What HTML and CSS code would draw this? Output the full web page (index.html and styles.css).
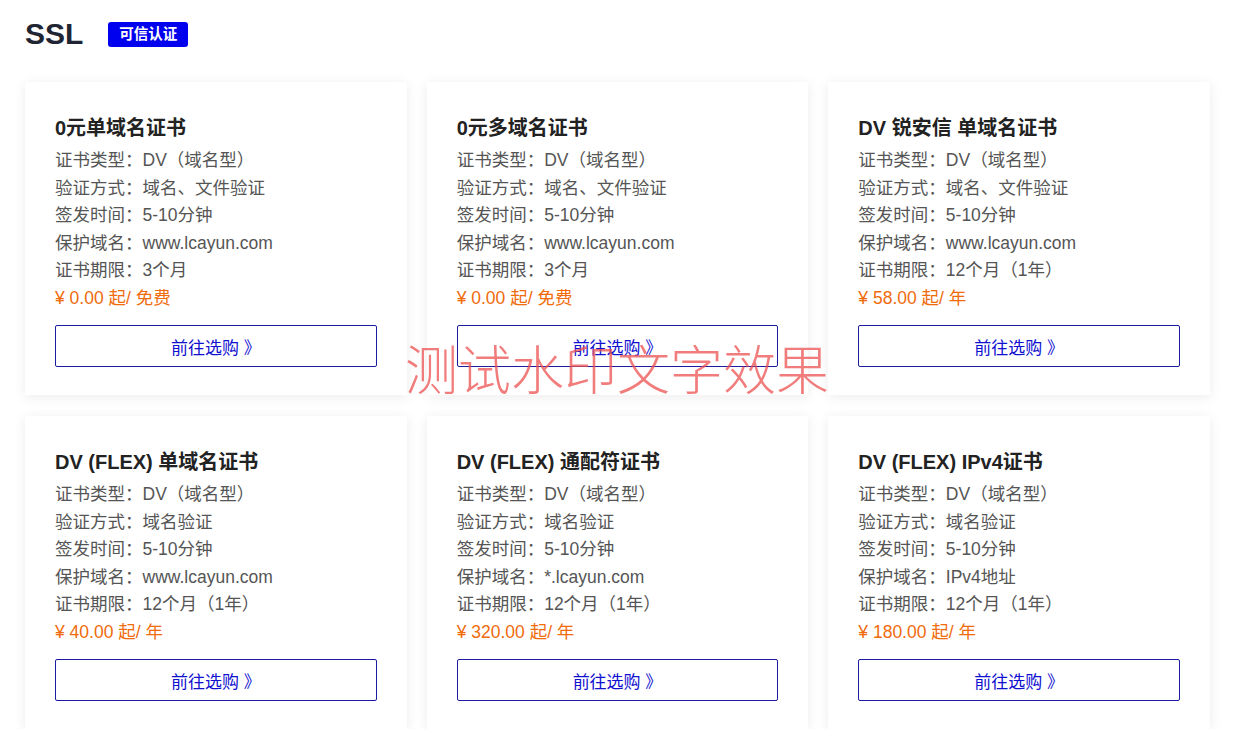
FILE: index.html
```html
<!DOCTYPE html>
<html lang="zh-CN">
<head>
<meta charset="utf-8">
<title>SSL</title>
<link rel="stylesheet" href="styles.css">
</head>
<body>
<div class="page">
  <div class="header">
    <h1 class="title">SSL</h1>
    <span class="badge">可信认证</span>
  </div>
  <div class="grid">
    <div class="card">
      <h2 class="card-title">0元单域名证书</h2>
      <p class="row">证书类型：DV（域名型）</p>
      <p class="row">验证方式：域名、文件验证</p>
      <p class="row">签发时间：5-10分钟</p>
      <p class="row">保护域名：www.lcayun.com</p>
      <p class="row">证书期限：3个月</p>
      <p class="price">¥ 0.00 起/ 免费</p>
      <a class="btn">前往选购 》</a>
    </div>
    <div class="card">
      <h2 class="card-title">0元多域名证书</h2>
      <p class="row">证书类型：DV（域名型）</p>
      <p class="row">验证方式：域名、文件验证</p>
      <p class="row">签发时间：5-10分钟</p>
      <p class="row">保护域名：www.lcayun.com</p>
      <p class="row">证书期限：3个月</p>
      <p class="price">¥ 0.00 起/ 免费</p>
      <a class="btn">前往选购 》</a>
    </div>
    <div class="card">
      <h2 class="card-title">DV 锐安信 单域名证书</h2>
      <p class="row">证书类型：DV（域名型）</p>
      <p class="row">验证方式：域名、文件验证</p>
      <p class="row">签发时间：5-10分钟</p>
      <p class="row">保护域名：www.lcayun.com</p>
      <p class="row">证书期限：12个月（1年）</p>
      <p class="price">¥ 58.00 起/ 年</p>
      <a class="btn">前往选购 》</a>
    </div>
    <div class="card">
      <h2 class="card-title">DV (FLEX) 单域名证书</h2>
      <p class="row">证书类型：DV（域名型）</p>
      <p class="row">验证方式：域名验证</p>
      <p class="row">签发时间：5-10分钟</p>
      <p class="row">保护域名：www.lcayun.com</p>
      <p class="row">证书期限：12个月（1年）</p>
      <p class="price">¥ 40.00 起/ 年</p>
      <a class="btn">前往选购 》</a>
    </div>
    <div class="card">
      <h2 class="card-title">DV (FLEX) 通配符证书</h2>
      <p class="row">证书类型：DV（域名型）</p>
      <p class="row">验证方式：域名验证</p>
      <p class="row">签发时间：5-10分钟</p>
      <p class="row">保护域名：*.lcayun.com</p>
      <p class="row">证书期限：12个月（1年）</p>
      <p class="price">¥ 320.00 起/ 年</p>
      <a class="btn">前往选购 》</a>
    </div>
    <div class="card">
      <h2 class="card-title">DV (FLEX) IPv4证书</h2>
      <p class="row">证书类型：DV（域名型）</p>
      <p class="row">验证方式：域名验证</p>
      <p class="row">签发时间：5-10分钟</p>
      <p class="row">保护域名：IPv4地址</p>
      <p class="row">证书期限：12个月（1年）</p>
      <p class="price">¥ 180.00 起/ 年</p>
      <a class="btn">前往选购 》</a>
    </div>
  </div>
  <div class="watermark">测试水印文字效果</div>
</div>
</body>
</html>
```
FILE: styles.css
```css
* { box-sizing: border-box; }
html, body { margin: 0; padding: 0; background: #fff; }
body {
  font-family: "Liberation Sans", Arial, "Noto Sans CJK SC", sans-serif;
  color: #555;
}
.page {
  position: relative;
  padding: 17px 40px 0 25px;
}
.header {
  display: flex;
  align-items: center;
  height: 34px;
}
.title {
  margin: 0;
  font-size: 30px;
  font-weight: 700;
  color: #1f2533;
  line-height: 34px;
}
.badge {
  margin-left: 25px;
  background: #0000ee;
  color: #fff;
  font-size: 14.5px;
  font-weight: 700;
  padding: 0 11px;
  height: 25px;
  line-height: 25px;
  border-radius: 3px;
}
.grid {
  margin-top: 31px;
  display: grid;
  grid-template-columns: repeat(3, 1fr);
  column-gap: 20px;
  row-gap: 21px;
}
.card {
  background: #fff;
  box-shadow: 0 2px 12px rgba(0, 0, 0, 0.08);
  padding: 33px 30px 28px;
  display: flex;
  flex-direction: column;
}
.card-title {
  margin: 0 0 6px;
  font-size: 20px;
  font-weight: 700;
  color: #222;
  line-height: 26px;
}
.row, .price {
  margin: 0;
  font-size: 17.5px;
  line-height: 27.5px;
}
.price { color: #f06b0c; }
.btn {
  margin-top: 13px;
  height: 42px;
  border: 1px solid #1c1ca0;
  border-radius: 2px;
  display: flex;
  align-items: center;
  justify-content: center;
  color: #1010d0;
  font-size: 17px;
}
.watermark {
  position: absolute;
  left: 405px;
  top: 342px;
  font-family: "Liberation Serif", "Noto Sans CJK SC", serif;
  font-size: 53px;
  font-weight: 300;
  color: rgba(236, 80, 80, 0.75);
  white-space: nowrap;
  line-height: 60px;
  pointer-events: none;
}
```
